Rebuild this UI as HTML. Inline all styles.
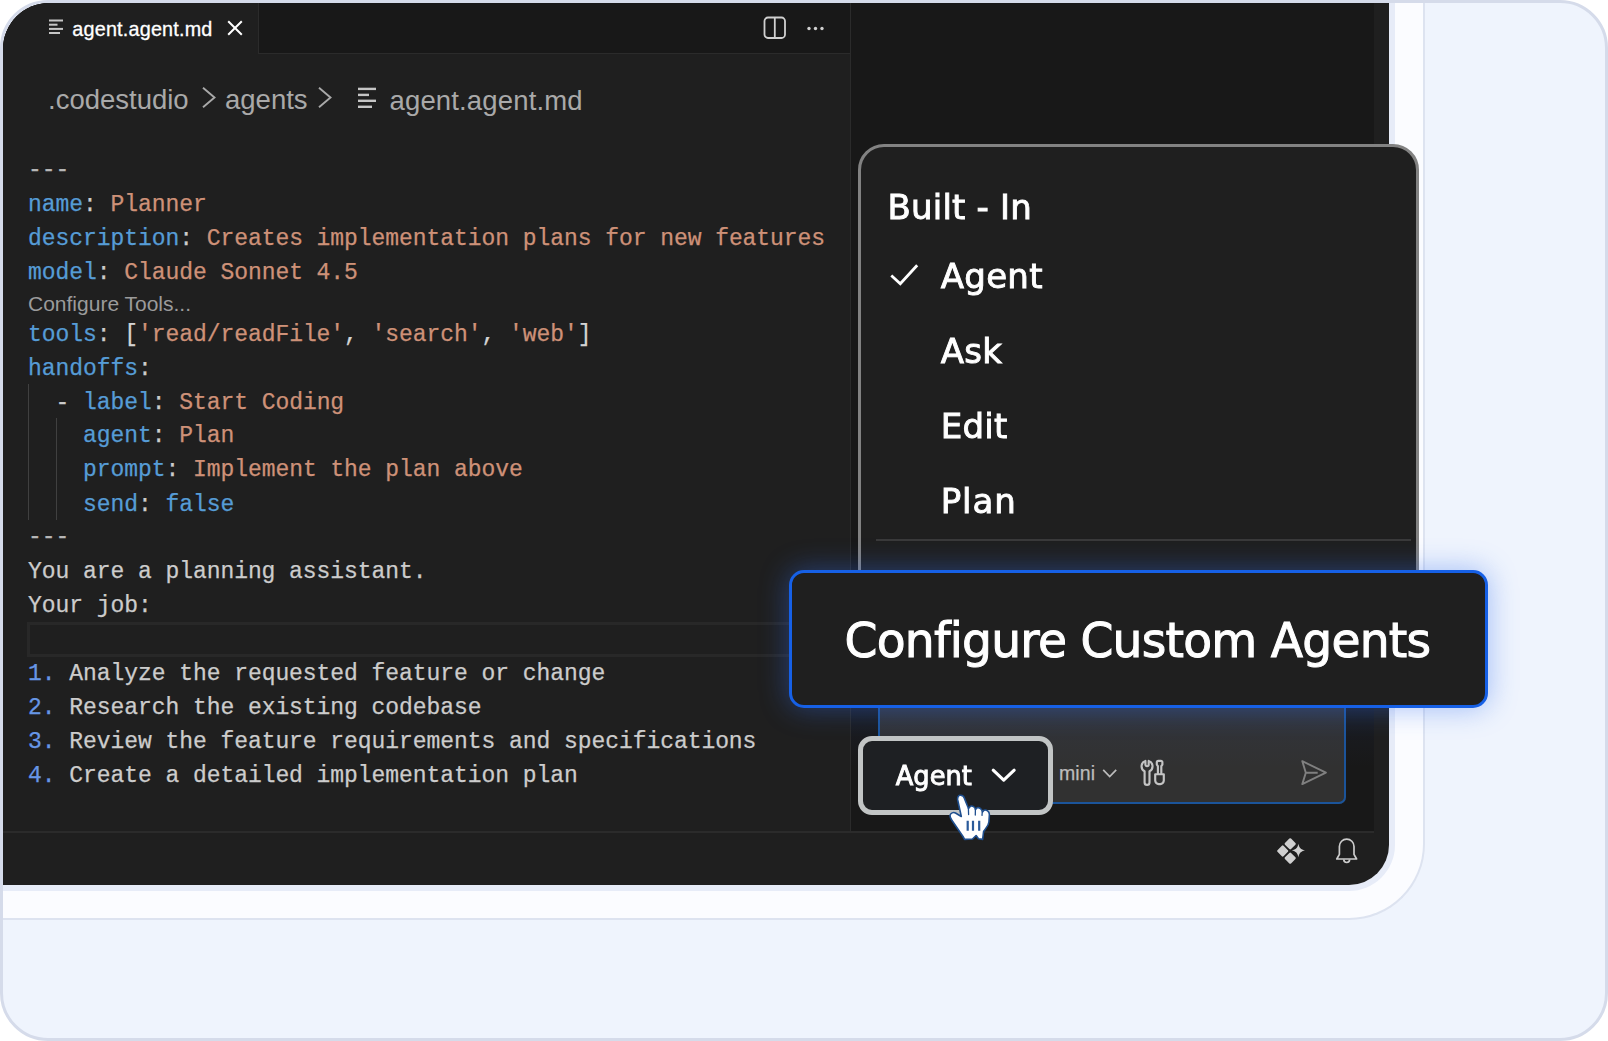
<!DOCTYPE html>
<html lang="en">
<head>
<meta charset="utf-8">
<title>Configure Custom Agents</title>
<style>
*{box-sizing:border-box;margin:0;padding:0}
html,body{width:1608px;height:1041px;overflow:hidden;background:#fff}
body{position:relative;font-family:"Liberation Sans",sans-serif}
.abs{position:absolute}
#frame{left:0;top:0;width:1608px;height:1041px;border:3px solid #d5dbea;border-radius:48px;background:#eff4fd;overflow:hidden}
#card{left:0;top:0;width:1422px;height:917px;background:#fbfcff;border-right:2px solid #dde3f0;border-bottom:2px solid #dde3f0;border-bottom-right-radius:76px}
#win{left:3px;top:3px;width:1386px;height:882px;background:#1f1f1f;border-radius:46px 0 40px 0;overflow:hidden}
#tabbar{left:0;top:0;width:847px;height:51px;background:#181818;border-bottom:1px solid #2b2b2b}
#tab{left:0;top:0;width:256px;height:51px;background:#1f1f1f;border-right:1px solid #2b2b2b}
#chat{left:847px;top:0;width:524px;height:829px;background:#181818;border-left:1px solid #2b2b2b}
#statusline{left:0;top:828px;width:1371px;height:2px;background:#2b2b2b}
.ui{font-family:"Liberation Sans",sans-serif;white-space:pre}
.code{font-family:"Liberation Mono",monospace;font-size:23px;letter-spacing:-0.06px;white-space:pre;color:#cccccc;line-height:34px;height:34px;left:28px;-webkit-text-stroke:0.25px}
.k{color:#569cd6}.s{color:#ce9178}.n{color:#6796e6}.w{color:#d4d4d4}.d{color:#b8b8b8;position:relative;top:-1.3px}

.os{font-family:"DejaVu Sans","Liberation Sans",sans-serif;color:#fff;white-space:pre;-webkit-text-stroke:0.9px #fff;transform:translateZ(0)}
#menu{left:858px;top:144px;width:561px;height:500px;background:#1f1f1f;border:3px solid #828282;border-radius:26px}
.mi{font-size:34px;line-height:44px;letter-spacing:0.3px}
#cfg{left:789px;top:570px;width:699px;height:138px;background:#1f1f1f;border:3px solid #1660e6;border-radius:15px;box-shadow:0 0 28px 1px rgba(50,110,240,0.4)}
#agentbtn{left:858px;top:736px;width:195px;height:79px;background:#1e2023;border:5px solid #c2c5c5;border-radius:14px}
#input{left:878px;top:640px;width:468px;height:164px;background:#313131;border-radius:7px;box-shadow:inset 0 0 0 2px #1b549a}
</style>
</head>
<body>
<div id="frame" class="abs">
 <div id="card" class="abs"></div>
 <div class="abs" style="left:-20px;top:-20px;width:1412px;height:908px;background:#e7ecf8;border-bottom-right-radius:46px"></div>
</div>
<div id="win" class="abs">
 <div id="tabbar" class="abs"></div>
 <div id="tab" class="abs"></div>
 <div id="chat" class="abs"></div>
 <div id="statusline" class="abs"></div>
</div>
<div id="ed" class="abs" style="left:0;top:0;width:850px;height:832px;overflow:hidden">
<div class="abs code" style="top:154.2px"><span class="d">---</span></div>
<div class="abs code" style="top:188.1px"><span class="k">name</span>: <span class="s">Planner</span></div>
<div class="abs code" style="top:222.0px"><span class="k">description</span>: <span class="s">Creates implementation plans for new features</span></div>
<div class="abs code" style="top:255.9px"><span class="k">model</span>: <span class="s">Claude Sonnet 4.5</span></div>
<div class="abs ui" id="cl" style="left:28px;top:292.4px;font-size:21px;color:#9b9b9b;line-height:24px">Configure Tools...</div>
<div class="abs code" style="top:318.4px"><span class="k">tools</span>: <span class="w">[</span><span class="s">'read/readFile'</span><span class="w">,</span> <span class="s">'search'</span><span class="w">,</span> <span class="s">'web'</span><span class="w">]</span></div>
<div class="abs code" style="top:352.3px"><span class="k">handoffs</span>:</div>
<div class="abs code" style="top:386.2px">  - <span class="k">label</span>: <span class="s">Start Coding</span></div>
<div class="abs code" style="top:419.4px">    <span class="k">agent</span>: <span class="s">Plan</span></div>
<div class="abs code" style="top:453.2px">    <span class="k">prompt</span>: <span class="s">Implement the plan above</span></div>
<div class="abs code" style="top:487.5px">    <span class="k">send</span>: <span class="k">false</span></div>
<div class="abs code" style="top:521.0px"><span class="d">---</span></div>
<div class="abs code" style="top:554.6px">You are a planning assistant.</div>
<div class="abs code" style="top:588.5px">Your job:</div>
<div class="abs code" style="top:623.5px"></div>
<div class="abs code" style="top:657.4px"><span class="n">1.</span> Analyze the requested feature or change</div>
<div class="abs code" style="top:691.3px"><span class="n">2.</span> Research the existing codebase</div>
<div class="abs code" style="top:725.2px"><span class="n">3.</span> Review the feature requirements and specifications</div>
<div class="abs code" style="top:759.1px"><span class="n">4.</span> Create a detailed implementation plan</div>

<div class="abs" style="left:28px;top:384px;width:1px;height:136px;background:#404040"></div>
<div class="abs" style="left:56px;top:418px;width:1px;height:102px;background:#404040"></div>
<div class="abs" style="left:27px;top:622px;width:831px;height:35px;border:3px solid #282828"></div>
<!-- tab -->
<svg class="abs" style="left:49px;top:19px" width="15" height="16" viewBox="0 0 15 16"><g fill="#c5c5c5"><rect x="0" y="0.5" width="14" height="2"/><rect x="0" y="4.7" width="8.5" height="2"/><rect x="0" y="8.9" width="14" height="2"/><rect x="0" y="13" width="11" height="2"/></g></svg>
<div class="abs ui" id="tabtxt" style="left:72.3px;top:15.7px;font-size:19.8px;letter-spacing:0.2px;-webkit-text-stroke:0.3px;line-height:26px;color:#ffffff">agent.agent.md</div>
<svg class="abs" style="left:227px;top:20px" width="16" height="16" viewBox="0 0 16 16"><path d="M1.2 1.2 L14.8 14.8 M14.8 1.2 L1.2 14.8" stroke="#ffffff" stroke-width="2" fill="none"/></svg>
<svg class="abs" style="left:763px;top:16px" width="24" height="24" viewBox="0 0 24 24"><rect x="1.5" y="1.5" width="20.5" height="20.5" rx="3.5" fill="none" stroke="#d0d0d0" stroke-width="1.8"/><path d="M11.8 1.5V22" stroke="#d0d0d0" stroke-width="1.8"/></svg>
<svg class="abs" style="left:806px;top:26px" width="20" height="5" viewBox="0 0 20 5"><g fill="#d0d0d0"><circle cx="3" cy="2.5" r="1.7"/><circle cx="9.5" cy="2.5" r="1.7"/><circle cx="16" cy="2.5" r="1.7"/></g></svg>
<!-- breadcrumb -->
<div class="abs ui" id="bc1" style="left:48px;top:83px;font-size:27.5px;line-height:34px;color:#a9a9a9">.codestudio</div>
<svg class="abs" style="left:201px;top:86px" width="16" height="23" viewBox="0 0 16 23"><path d="M2 1.8 L13.5 11.5 L2 21.2" stroke="#a9a9a9" stroke-width="1.9" fill="none"/></svg>
<div class="abs ui" id="bc2" style="left:225px;top:83px;font-size:27.5px;line-height:34px;color:#a9a9a9">agents</div>
<svg class="abs" style="left:317px;top:86px" width="16" height="23" viewBox="0 0 16 23"><path d="M2 1.8 L13.5 11.5 L2 21.2" stroke="#a9a9a9" stroke-width="1.9" fill="none"/></svg>
<svg class="abs" style="left:358px;top:87px" width="19" height="22" viewBox="0 0 19 22"><g fill="#c5c5c5"><rect x="0" y="0.7" width="18" height="2.4"/><rect x="0" y="6.7" width="11" height="2.4"/><rect x="0" y="12.6" width="18" height="2.4"/><rect x="0" y="18.6" width="14" height="2.4"/></g></svg>
<div class="abs ui" id="bc3" style="left:389.5px;top:83.5px;letter-spacing:0.15px;font-size:27.5px;line-height:34px;color:#a9a9a9">agent.agent.md</div>

</div>

<div id="input" class="abs"></div>
<div class="abs" style="left:851px;top:708px;width:523px;height:60px;background:linear-gradient(rgba(60,100,200,0.07),rgba(60,100,200,0))"></div>
<div id="menu" class="abs"></div>
<div class="abs" style="left:876px;top:539px;width:535px;height:2px;background:#3a3a3a"></div>
<div class="abs os mi" id="m0" style="letter-spacing:0.2px;left:887.5px;top:184.5px">Built - In</div>
<svg class="abs" style="left:886px;top:259px" width="38" height="32" viewBox="0 0 38 32"><path d="M5.3 16.5 L14.3 24.8 L31.2 6.2" stroke="#fff" stroke-width="2.8" fill="none" stroke-linejoin="miter"/></svg>
<div class="abs os mi" id="m1" style="left:940.7px;top:254px">Agent</div>
<div class="abs os mi" id="m2" style="left:940.7px;top:329.2px">Ask</div>
<div class="abs os mi" id="m3" style="left:940.7px;top:404.2px">Edit</div>
<div class="abs os mi" id="m4" style="letter-spacing:0.9px;left:940.7px;top:479px">Plan</div>
<div id="cfg" class="abs"></div>
<div class="abs os" id="cfgt" style="left:844.5px;top:611px;font-size:47.2px;line-height:60px;letter-spacing:-0.78px;-webkit-text-stroke:1px #fff">Configure Custom Agents</div>
<div class="abs ui" id="mini" style="left:1059px;top:759.6px;font-size:19.5px;letter-spacing:0.1px;-webkit-text-stroke:0.25px;line-height:26px;color:#bcbcbc">mini</div>
<svg class="abs" style="left:1101px;top:767px" width="18" height="12" viewBox="0 0 18 12"><path d="M2.2 2.8 L8.7 9.6 L15.2 2.8" stroke="#bcbcbc" stroke-width="1.7" fill="none"/></svg>

<svg class="abs" style="left:1130px;top:750px" width="50" height="45" viewBox="0 0 50 45"><g fill="none" stroke="#c4c4c4" stroke-width="2.15" stroke-linejoin="round"><path d="M15.4 10.9 V14.6 a1.65 1.65 0 0 0 3.3 0 V10.9 A5.6 5.6 0 0 1 19.5 21.2 V32.4 a2.45 2.45 0 0 1 -4.9 0 V21.2 A5.6 5.6 0 0 1 15.4 10.9 Z"/><path d="M27.9 24 V16.2 L26.8 14.6 V12.4 A1.5 1.5 0 0 1 28.3 10.9 H30.9 A1.5 1.5 0 0 1 32.4 12.4 V14.6 L31.3 16.2 V24"/><path d="M25.2 24.2 H33.8 V30.6 A3.5 3.5 0 0 1 30.3 34.1 H28.7 A3.5 3.5 0 0 1 25.2 30.6 Z"/></g></svg>
<svg class="abs" style="left:1290px;top:750px" width="50" height="45" viewBox="0 0 50 45"><path d="M12.3 11.2 L35.9 22.7 L12.3 34.1 L15.8 22.7 Z M15.8 22.7 H27.7" fill="none" stroke="#808080" stroke-width="1.9" stroke-linejoin="round"/></svg>
<svg class="abs" style="left:1260px;top:825px" width="120" height="50" viewBox="0 0 120 50"><g fill="#cfcfcf"><rect x="-4.3" y="-4.3" width="8.6" height="8.6" rx="1.2" transform="translate(30.2 18.8) rotate(45)"/><rect x="-4.3" y="-4.3" width="8.6" height="8.6" rx="1.2" transform="translate(22.7 26) rotate(45)"/><rect x="-4.3" y="-4.3" width="8.6" height="8.6" rx="1.2" transform="translate(30.2 33.2) rotate(45)"/><path d="M38.4 18.8 C39.3 23 40.8 24.5 45 25.4 C40.8 26.3 39.3 27.8 38.4 32.2 C37.5 27.8 36 26.3 31.8 25.4 C36 24.5 37.5 23 38.4 18.8 Z"/></g><g fill="none" stroke="#cccccc" stroke-width="1.7" stroke-linejoin="round"><path d="M76.8 34 L79.4 29.3 V21.4 a7.3 7.3 0 0 1 14.6 0 V29.3 L96.6 34 Z"/><path d="M83.8 34.6 a2.9 2.9 0 0 0 5.8 0"/></g></svg>

<div id="agentbtn" class="abs"></div>
<div class="abs os" id="agt" style="-webkit-text-stroke:0.95px #fff;left:895.8px;top:758.7px;font-size:25.7px;line-height:34px;letter-spacing:0px">Agent</div>
<svg class="abs" style="left:988px;top:765px" width="32" height="22" viewBox="0 0 32 22"><path d="M5.2 5.2 L15.7 15.2 L26.2 5.2" stroke="#fff" stroke-width="3.1" fill="none" stroke-linecap="round" stroke-linejoin="round"/></svg>

<svg class="abs" style="left:920px;top:770px" width="100" height="80" viewBox="0 0 100 80"><path d="M40 25.3 C38.2 25.5 37.3 27.5 37.7 30 L41.3 46.5 L35.5 43 C33.5 41.8 30.5 43 30 45.5 C29.8 47 31 49 32 50.5 L43 66.5 L44.6 69.4 L52.5 69 L56.1 65.5 L58.5 68.8 L62.6 69.4 L63.6 61.5 C66 58 68.5 56 68.9 52 L69.4 44.5 C69.3 41.5 66.5 39.5 64 40.2 L62.5 42 C62 39 59.5 37.2 57.2 37.8 L55.5 39.5 C55 37 52.5 35.5 50.5 36.3 L48.5 38.5 L44.4 28.4 C43.8 26 41.8 25.1 40 25.3 Z" fill="#ffffff" stroke="#1f4f8f" stroke-width="1.6" stroke-linejoin="round"/><path d="M48.4 38.3 L48.6 44.6 M55.4 39.3 L55.3 45 M62.3 41.8 L62 45.4" stroke="#1f4f8f" stroke-width="1.3" fill="none" stroke-linecap="round"/><path d="M47.7 50.7 V60.7 M53 50.7 V60.7 M59.2 50.7 V60.7" stroke="#2a5a9a" stroke-width="2.2" fill="none"/></svg>


</body>
</html>
